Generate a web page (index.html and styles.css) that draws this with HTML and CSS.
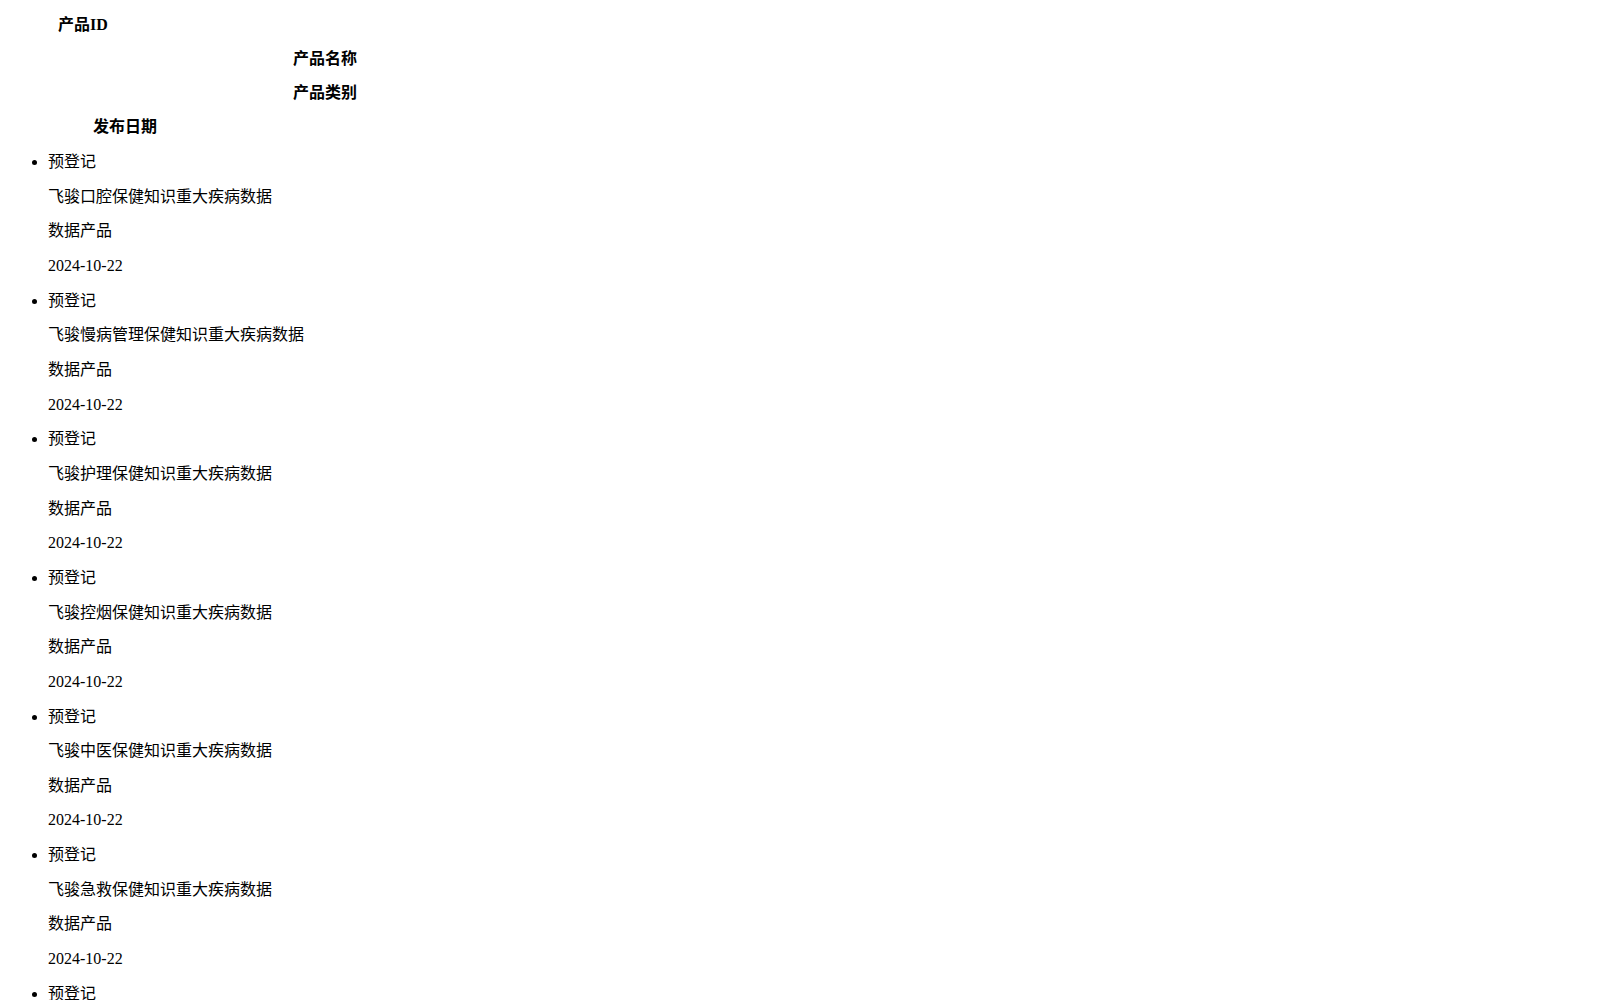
FILE: index.html
```html
<!DOCTYPE html>
<html lang="zh-CN">
<head>
<meta charset="utf-8">
<title>产品列表</title>
<link rel="stylesheet" href="styles.css">
</head>
<body>
<div class="head">
  <p class="h h-id">产品ID</p>
  <p class="h h-name">产品名称</p>
  <p class="h h-cat">产品类别</p>
  <p class="h h-date">发布日期</p>
</div>
<ul class="list">
  <li><p>预登记</p><p>飞骏口腔保健知识重大疾病数据</p><p>数据产品</p><p>2024-10-22</p></li>
  <li><p>预登记</p><p>飞骏慢病管理保健知识重大疾病数据</p><p>数据产品</p><p>2024-10-22</p></li>
  <li><p>预登记</p><p>飞骏护理保健知识重大疾病数据</p><p>数据产品</p><p>2024-10-22</p></li>
  <li><p>预登记</p><p>飞骏控烟保健知识重大疾病数据</p><p>数据产品</p><p>2024-10-22</p></li>
  <li><p>预登记</p><p>飞骏中医保健知识重大疾病数据</p><p>数据产品</p><p>2024-10-22</p></li>
  <li><p>预登记</p><p>飞骏急救保健知识重大疾病数据</p><p>数据产品</p><p>2024-10-22</p></li>
  <li><p>预登记</p><p>飞骏营养保健知识重大疾病数据</p><p>数据产品</p><p>2024-10-22</p></li>
  <li><p>预登记</p><p>飞骏心理保健知识重大疾病数据</p><p>数据产品</p><p>2024-10-22</p></li>
  <li><p>预登记</p><p>飞骏运动保健知识重大疾病数据</p><p>数据产品</p><p>2024-10-22</p></li>
  <li><p>预登记</p><p>飞骏妇幼保健知识重大疾病数据</p><p>数据产品</p><p>2024-10-22</p></li>
  <li><p>预登记</p><p>飞骏老年保健知识重大疾病数据</p><p>数据产品</p><p>2024-10-22</p></li>
  <li><p>预登记</p><p>飞骏用药保健知识重大疾病数据</p><p>数据产品</p><p>2024-10-22</p></li>
  <li><p>预登记</p><p>飞骏康复保健知识重大疾病数据</p><p>数据产品</p><p>2024-10-22</p></li>
</ul>
</body>
</html>
```
FILE: styles.css
```css
html {
  overflow-y: scroll;
}
html::-webkit-scrollbar {
  width: 15px;
  background: #f1f1f1;
}
html::-webkit-scrollbar-thumb {
  background: #c1c1c1;
  border: 2px solid #f1f1f1;
  border-top-width: 0;
  border-bottom-width: 0;
}
body {
  margin: 0 8px 8px;
  padding-top: 0;
  font-family: "Liberation Serif", "Noto Sans CJK SC", serif;
  font-size: 16px;
  color: #000;
  background: #fff;
}
p {
  margin: 16px 0;
}
.h {
  font-weight: bold;
  line-height: 18px;
}
.h-id { padding-left: 50px; }
.h-name { padding-left: 285px; }
.h-cat { padding-left: 285px; }
.h-date { padding-left: 85px; margin-bottom: 17px; }
.list {
  margin: 16px 0;
  padding-left: 40px;
}
.list p {
  line-height: 18.65px;
}
```
